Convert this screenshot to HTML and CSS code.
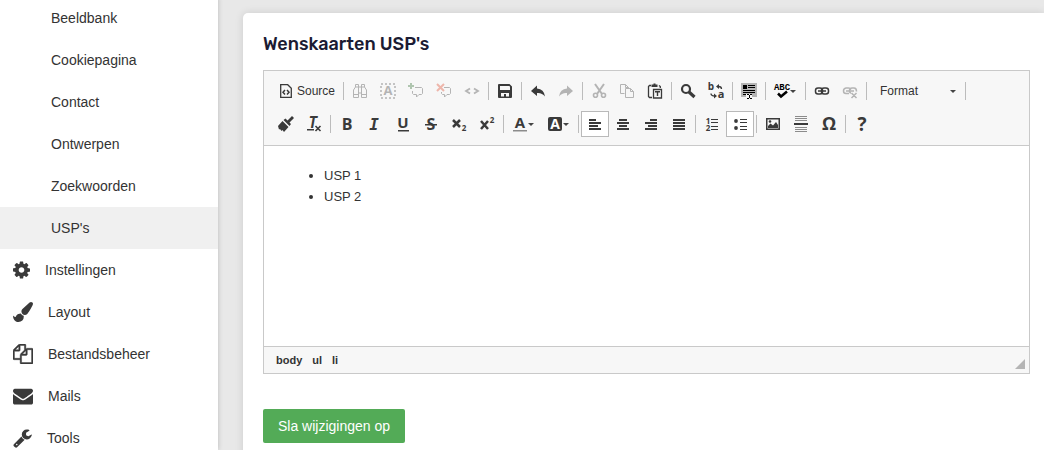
FILE: index.html
```
<!DOCTYPE html>
<html lang="nl">
  <head>
    <meta charset="utf-8" />
    <title>Wenskaarten USP's</title>
    <link rel="stylesheet" href="styles.css">
  </head>
  <body>
    <nav class="sidebar">
      <a class="sub" href="#">Beeldbank</a>
      <a class="sub" href="#">Cookiepagina</a>
      <a class="sub" href="#">Contact</a>
      <a class="sub" href="#">Ontwerpen</a>
      <a class="sub" href="#">Zoekwoorden</a>
      <a class="sub active" href="#">USP's</a>
      <a href="#">
        <svg width="17" height="20" viewBox="0 0 1536 1792"><path d="M1024 896q0-106-75-181t-181-75-181 75-75 181 75 181 181 75 181-75 75-181zm512-109v222q0 12-8 23t-20 13l-185 28q-19 54-39 91 35 50 107 138 10 12 10 25t-9 23q-27 37-99 108t-94 71q-12 0-26-9l-138-108q-44 23-91 38-16 136-29 186-7 28-36 28H657q-14 0-24.500-8.500T621 1634l-28-184q-49-16-90-37l-141 107q-10 9-25 9-14 0-25-11-126-114-165-168-7-10-7-23 0-12 8-23 15-21 51-66.500t54-70.500q-27-50-41-99L29 1041q-13-2-21-12.500T0 1005V783q0-12 8-23t19-13l186-28q14-46 39-92-40-57-107-138-10-12-10-24 0-10 9-23 26-36 98.500-107.500T337 263q13 0 26 10l138 107q44-23 91-38 16-136 29-186 7-28 36-28h222q14 0 24.500 8.500T915 158l28 184q49 16 90 37l142-107q9-9 24-9 13 0 25 10 129 119 165 170 7 8 7 22 0 12-8 23-15 21-51 66.500t-54 70.500q26 50 41 98l183 28q13 2 21 12.500t8 23.500z"/></svg>
        Instellingen
      </a>
      <a href="#">
        <svg width="20" height="20" viewBox="0 0 1792 1792"><path d="M1615 0q70 0 122.500 46.500T1790 163q0 63-45 151-332 629-465 752-97 91-218 91-126 0-216.500-92.500T755 845q0-128 92-212L1485 54q59-54 130-54zM706 1034q39 76 106.500 130t150.500 76l1 71q4 213-129.500 347T486 1792q-123 0-218-46.500T115.500 1618 29 1435 0 1215q7 5 41 30t62 44.500 59 36.500 46 17q41 0 55-37 25-66 57.500-112.500t69.500-76 88-47.500 103-25.500 125-10.500z"/></svg>
        Layout
      </a>
      <a href="#">
        <svg class="bold" width="20" height="20" viewBox="0 0 1792 1792"><path d="M1696 384q40 0 68 28t28 68v1216q0 40-28 68t-68 28H736q-40 0-68-28t-28-68v-288H96q-40 0-68-28t-28-68V640q0-40 20-88t48-76L476 68q28-28 76-48t88-20h416q40 0 68 28t28 68v328q68-40 128-40h416zm-544 213L853 896h299V597zM512 213L213 512h299V213zm196 647l316-316V128H640v416q0 40-28 68t-68 28H128v640h512v-256q0-40 20-88t48-76zm956 804V512h-384v416q0 40-28 68t-68 28H768v640h896z"/></svg>
        Bestandsbeheer
      </a>
      <a href="#">
        <svg width="20" height="20" viewBox="0 0 1792 1792"><path d="M1792 710v794q0 66-47 113t-113 47H160q-66 0-113-47T0 1504V710q44 49 101 87 362 246 497 345 57 42 92.500 65.500t94.500 48 110 24.500h2q51 0 110-24.500t94.500-48 92.500-65.500q170-123 498-345 57-39 100-87zm0-294q0 79-49 151t-122 123q-376 261-468 325-10 7-42.500 30.500t-54 38-52 32.500-57.500 27-50 9h-2q-23 0-50-9t-57.500-27-52-32.500-54-38T639 1015q-91-64-262-182.500T172 690q-62-42-117-115.500T0 438q0-78 41.500-130T160 256h1472q65 0 112.500 47t47.500 113z"/></svg>
        Mails
      </a>
      <a href="#">
        <svg width="19" height="20" viewBox="0 0 1664 1792"><path d="M384 1472q0-26-19-45t-45-19-45 19-19 45 19 45 45 19 45-19 19-45zm644-420l-682 682q-37 37-90 37-52 0-91-37L59 1626q-38-36-38-90 0-53 38-91l681-681q39 98 114.500 173.500T1028 1052zm634-435q0 39-23 106-47 134-164.500 217.500T1216 1024q-185 0-316.500-131.500T768 576t131.500-316.500T1216 128q58 0 121.500 16.500T1445 191q16 11 16 28t-16 28l-293 169v224l193 107q5-3 79-48.500t135.500-81T1630 582q15 0 23.500 10t8.500 25z"/></svg>
        Tools
      </a>
    </nav>

    <main>
      <form class="card">
        <h1>Wenskaarten USP's</h1>

        <div class="editor">
          <div class="toolbar">
            <div class="row">
              <button type="button" class="source">
                <svg viewBox="0 0 16 16"><path class="line" stroke-width="1.300" d="M2.700 1.700h7l3.600 3.600v9H2.700z"/><path class="line" stroke-width="1.500" d="M7 7L5 9.300 7 11.500M9 7l2 2.300-2 2.200"/></svg>
                Source
              </button>
              <span class="sep"></span>
              <button type="button" title="Find" disabled>
                <svg viewBox="0 0 16 16"><path class="line" d="M1.500 14.500V7l2-3V1.500h3V4h3V1.500h3V4l2 3v7.500h-5V10h-3v4.500zM6.500 4v6M9.500 4v6M1.500 11.500h5M9.500 11.500h5M3.500 4h3M9.500 4h3"/></svg>
              </button>
              <button type="button" title="Select All" disabled>
                <svg viewBox="0 0 16 16"><path class="line" stroke-width="1.500" stroke-dasharray="2 2" d="M1 1h14v14H1z"/><text x="8" y="12" font-size="13">A</text></svg>
              </button>
              <button type="button" title="Add comment" disabled>
                <svg viewBox="0 0 16 16"><path class="line" d="M7 4.500h6.500l1 1v5l-1 1H11L8.500 14v-2.500h-3l-1-1V8"/><path class="green" d="M2 0h2v2h2v2H4v2H2V4H0V2h2z"/></svg>
              </button>
              <button type="button" title="Remove comment" disabled>
                <svg viewBox="0 0 16 16"><path class="line" d="M8 4.500h5.500l1 1v5l-1 1H11L8.500 14v-2.500h-2l-1-1V9"/><path class="red" d="M1 1l7 7M8 1L1 8"/></svg>
              </button>
              <button type="button" title="Code" disabled>
                <svg viewBox="0 0 16 16"><path class="line" stroke-width="1.800" d="M6 5.500L2 8l4 2.500M10 5.500L14 8l-4 2.500"/></svg>
              </button>
              <span class="sep"></span>
              <button type="button" title="Save">
                <svg viewBox="0 0 16 16"><path fill-rule="evenodd" d="M1 2q0-1 1-1h10.500L15 3.500V14q0 1-1 1H2q-1 0-1-1zm2 1v4h10V3.500L12 3zm1 7v3.500h3V11h2v2.500h3V10z"/></svg>
              </button>
              <span class="sep"></span>
              <button type="button" title="Undo">
                <svg viewBox="0 0 16 16"><path d="M7 2.500v3q7 .5 8 8-3-4-8-3.500v3L1 8z"/></svg>
              </button>
              <button type="button" title="Redo" disabled>
                <svg viewBox="0 0 16 16"><path d="M9 2.500v3q-7 .5-8 8 3-4 8-3.500v3L15 8z"/></svg>
              </button>
              <span class="sep"></span>
              <button type="button" title="Cut" disabled>
                <svg viewBox="0 0 16 16"><path class="line" stroke-width="2" d="M4 1l7 10M13 1L6 11"/><circle class="line" stroke-width="1.600" cx="4.500" cy="12.200" r="2"/><circle class="line" stroke-width="1.600" cx="12.500" cy="12.200" r="2"/></svg>
              </button>
              <button type="button" title="Copy" disabled>
                <svg viewBox="0 0 16 16"><path class="line" d="M5.500 10.500h-4v-9h5l3 3v1M6.500 1.500v3h3M6.500 5.500h5l3 3v6h-8zM11.500 5.500v3h3"/></svg>
              </button>
              <button type="button" title="Paste as plain text">
                <svg viewBox="0 0 16 16"><path class="line" stroke-width="1.300" d="M4 2.500H2.500l-1 1v10l1 1H5M12 2.500l1.300 1V5M6.500 6.500h8v8.500h-8z"/><path d="M4.500 1.500h2V.5h2v1h2V4h-6zM8 8h5v1.500h-1.800V13H9.800V9.500H8z"/></svg>
              </button>
              <span class="sep"></span>
              <button type="button" title="Find">
                <svg viewBox="0 0 16 16"><circle class="line" stroke-width="2.200" cx="6" cy="6" r="4"/><path class="line" stroke-width="3.200" d="M9 9l5.500 5"/></svg>
              </button>
              <button type="button" title="Replace">
                <svg viewBox="0 0 16 16"><text x="3" y="7" font-size="10">b</text><text x="13" y="15" font-size="11">a</text><path class="line" stroke-width="1.300" d="M13.500 6q0-2.500-3-2.500M3 10.500q0 2.500 4 2.500"/><path d="M8 3.500L11 1v5zM9 13l-3-2.500v5z"/></svg>
              </button>
              <span class="sep"></span>
              <button type="button" title="Select">
                <svg viewBox="0 0 16 16"><path fill="#b5b5b5" d="M0 0h16v14H0z"/><path class="black" d="M2 2h4v4H2zM7 2h7v1H7zM7 4h7v1H7zM2 7h12v1H2zM2 9h12v1H2zM2 11h3v1H2z"/><path fill="#f7f7f7" d="M5 11h6v5H5z"/><path class="black" d="M6 11h2v1H6zM9 11h2v1H9zM8 12h1v3H8zM6 15h2v1H6zM9 15h2v1H9z"/></svg>
              </button>
              <span class="sep"></span>
              <button type="button" class="drop" title="Spell check">
                <svg viewBox="0 0 16 16"><text class="black abc" x="8" y="7">ABC</text><path class="line dark" stroke-width="2.500" d="M4 10.500l3 3 6-5"/></svg>
              </button>
              <span class="sep"></span>
              <button type="button" title="Link">
                <svg viewBox="0 0 16 16"><rect class="line" stroke-width="1.500" x="1.500" y="5" width="7" height="6" rx="2.500"/><rect class="line" stroke-width="1.500" x="7.500" y="5" width="7" height="6" rx="2.500"/><path class="line" stroke-width="1.500" d="M4 8h8"/></svg>
              </button>
              <button type="button" title="Unlink" disabled>
                <svg viewBox="0 0 16 16"><path class="line" stroke-width="1.500" d="M7 10.500H4q-2.500 0-2.500-2.500T4 5h2.500q2 0 2 2M9 10q-1.500 0-1.500-2.500T10 5h2q2.500 0 2.500 3.500M4 8h8M9.500 10l5 5M14.500 10l-5 5"/></svg>
              </button>
              <span class="sep"></span>
              <button type="button" class="format">Format</button>
              <span class="sep"></span>
            </div>

            <div class="row">
              <button type="button" title="Copy formatting">
                <svg viewBox="0 0 16 16"><path d="M14 0l2 2-4.500 4.500L13 8l-1.500 2L5.500 4 7.500 2.500 9.500 4.500zM4.500 5l6 6L6 16l-1.500-2-1 1L2 13l-1 .5L0 10z"/></svg>
              </button>
              <button type="button" title="Remove format">
                <svg viewBox="0 0 16 16"><text class="italic mono" x="7" y="12" font-size="15">T</text><path d="M1 13h7v1.500H1z"/><path class="line" stroke-width="1.600" d="M9.500 10l5 5M14.500 10l-5 5"/></svg>
              </button>
              <span class="sep"></span>
              <button type="button" title="Bold"><svg viewBox="0 0 16 16"><text x="8" y="14" font-size="16">B</text></svg></button>
              <button type="button" title="Italic"><svg viewBox="0 0 16 16"><text class="italic mono" x="7" y="14" font-size="16">I</text></svg></button>
              <button type="button" title="Underline"><svg viewBox="0 0 16 16"><text x="8" y="12" font-size="15">U</text><path d="M3 14h11v1.500H3z"/></svg></button>
              <button type="button" title="Strikethrough"><svg viewBox="0 0 16 16"><text x="8" y="14" font-size="16">S</text><path d="M2 8h12v1.500H2z"/></svg></button>
              <button type="button" title="Subscript"><svg viewBox="0 0 16 16"><path class="line" stroke-width="2.500" d="M2 4l7 7M9 4l-7 7"/><text x="13" y="15" font-size="8">2</text></svg></button>
              <button type="button" title="Superscript"><svg viewBox="0 0 16 16"><path class="line" stroke-width="2.500" d="M2 5l7 8M9 5l-7 8"/><text x="13" y="7" font-size="8">2</text></svg></button>
              <span class="sep"></span>
              <button type="button" class="drop" title="Text colour"><svg viewBox="0 0 16 16"><text x="8" y="12" font-size="15">A</text><path fill="#8c8c8c" d="M1 14h14v1.500H1z"/></svg></button>
              <button type="button" class="drop" title="Background colour"><svg viewBox="0 0 16 16"><rect x="1" y="1" width="14" height="14" rx="2"/><text class="white" x="8" y="13" font-size="14">A</text></svg></button>
              <span class="sep"></span>
              <button type="button" class="on" title="Align left"><svg viewBox="0 0 16 16"><path d="M2 3h7v2H2zM2 6h12v2H2zM2 9h9v2H2zM2 12h12v2H2z"/></svg></button>
              <button type="button" title="Center"><svg viewBox="0 0 16 16"><path d="M4 3h8v2H4zM2 6h12v2H2zM4 9h8v2H4zM2 12h12v2H2z"/></svg></button>
              <button type="button" title="Align right"><svg viewBox="0 0 16 16"><path d="M7 3h7v2H7zM2 6h12v2H2zM5 9h9v2H5zM2 12h12v2H2z"/></svg></button>
              <button type="button" title="Justify"><svg viewBox="0 0 16 16"><path d="M2 3h12v2H2zM2 6h12v2H2zM2 9h12v2H2zM2 12h12v2H2z"/></svg></button>
              <span class="sep"></span>
              <button type="button" title="Numbered list"><svg viewBox="0 0 16 16"><text x="4" y="8" font-size="8">1</text><text x="4" y="15" font-size="8">2</text><path d="M7 3h7v1H7zM7 6h7v1H7zM7 10h7v1H7zM7 13h7v1H7z"/></svg></button>
              <button type="button" class="on" title="Bulleted list"><svg viewBox="0 0 16 16"><circle cx="4" cy="5" r="1.900"/><circle cx="4" cy="12" r="1.900"/><path d="M8 3h7v1H8zM8 6h7v1H8zM8 10h7v1H8zM8 13h7v1H8z"/></svg></button>
              <span class="sep"></span>
              <button type="button" title="Image"><svg viewBox="0 0 16 16"><path fill-rule="evenodd" d="M1 2h14v12H1zm1.500 1.500v9h11v-9z"/><path d="M3 12V10l2.500-2.500L8 9.500 11 6l2 3v3z"/><circle cx="5" cy="5.500" r="1.300"/></svg></button>
              <button type="button" title="Horizontal line"><svg viewBox="0 0 16 16"><path fill="#8c8c8c" d="M2 0h12v1H2zM2 2h12v1H2zM2 4h12v1H2zM2 11h12v1H2zM2 13h12v1H2zM2 15h12v1H2z"/><path d="M1 7h14v2H1z"/></svg></button>
              <button type="button" title="Special character"><svg viewBox="0 0 16 16"><text x="8" y="14" font-size="18">Ω</text></svg></button>
              <span class="sep"></span>
              <button type="button" title="Help"><svg viewBox="0 0 16 16"><text x="8" y="15" font-size="19">?</text></svg></button>
            </div>
          </div>

          <div class="content" contenteditable="true" spellcheck="false">
            <ul>
              <li>USP 1</li>
              <li>USP 2</li>
            </ul>
          </div>

          <div class="path">
            <a href="#">body</a>
            <a href="#">ul</a>
            <a href="#">li</a>
            <span class="resizer"></span>
          </div>
        </div>

        <button type="submit" class="save">Sla wijzigingen op</button>
      </form>
    </main>
  </body>
</html>
```
FILE: styles.css
```
* {
  box-sizing: border-box;
}
body {
  margin: 0;
  height: 100vh;
  display: flex;
  overflow: hidden;
  background: #e8e8e8;
  color: #333;
  font-family: "Liberation Sans", Arial, sans-serif;
  font-size: 14px;
}
button {
  font-family: inherit;
}

/* menu */
.sidebar {
  flex: 0 0 218px;
  margin-top: -3px;
  background: #fff;
  box-shadow: 0 0 5px rgba(0, 0, 0, 0.2);
}
.sidebar a {
  display: flex;
  align-items: center;
  gap: 15px;
  height: 42px;
  padding-left: 13px;
  color: #333;
  text-decoration: none;
}
.sidebar a.sub {
  padding-left: 51px;
}
.sidebar a.active {
  background: #f0f0f0;
}
.sidebar svg {
  fill: #3a3a3a;
}
.sidebar svg.bold {
  stroke: #3a3a3a;
  stroke-width: 40;
}

main {
  flex: 1;
  min-width: 0;
  padding: 13px 0 0 25px;
}
.card {
  min-height: 100%;
  padding: 20px 14px 20px 20px;
  background: #fff;
  border-radius: 5px 0 0 0;
  box-shadow: 0 0 8px rgba(0, 0, 0, 0.12);
}
h1 {
  margin: 0 0 15px;
  color: #1b1b33;
  font-family: Rubik, Roboto, sans-serif;
  font-size: 18px;
  font-weight: 500;
  line-height: 22px;
}

/* editor */
.editor {
  border: 1px solid #c9c9c9;
}
.toolbar {
  padding: 7px 8px 8px;
  background: #f7f7f7;
  border-bottom: 1px solid #c9c9c9;
}
.row {
  display: flex;
  align-items: center;
  height: 26px;
}
.row + .row {
  margin-top: 7px;
}
.row button {
  display: flex;
  align-items: center;
  flex: 0 0 28px;
  height: 26px;
  padding: 0 5px;
  background: none;
  border: 1px solid transparent;
  color: #333;
  font-size: 12px;
  cursor: pointer;
}
.row button:disabled {
  opacity: 0.35;
  cursor: default;
}
.row button.on {
  background: #fff;
  border-color: #b9b9b9;
}
.row button.source {
  flex-basis: 69px;
  gap: 3px;
}
.row button.drop {
  flex-basis: 35px;
}
.row button.format {
  flex-basis: 94px;
  justify-content: space-between;
  padding: 0 6px 0 10px;
}
.drop::after,
.format::after {
  content: "";
  border: 3px solid transparent;
  border-top-color: #444;
  border-bottom: 0;
}
.sep {
  flex: 0 0 1px;
  height: 18px;
  margin: 0 2px;
  background: #bcbcbc;
}
.row svg {
  flex: none;
  width: 16px;
  height: 16px;
  overflow: visible;
  fill: #3a3a3a;
}
.row text {
  font-family: "Open Sans", "DejaVu Sans", sans-serif;
  font-weight: bold;
  text-anchor: middle;
}
.row text.italic {
  font-style: italic;
}
.row text.mono {
  font-family: "DejaVu Sans Mono", monospace;
}
.row text.abc {
  font-family: "Liberation Mono", monospace;
  font-size: 9px;
}
.row .black {
  fill: #000;
}
.row .white {
  fill: #fff;
}
.row .line {
  fill: none;
  stroke: #3a3a3a;
}
.row .dark {
  stroke: #000;
}
.row .green {
  fill: #2c6a2c;
}
.row .red {
  fill: none;
  stroke: #e04020;
  stroke-width: 2;
}

.content {
  min-height: 200px;
  padding: 19px 20px;
  font-size: 13px;
  line-height: 21px;
}
.content ul {
  margin: 0;
  padding-left: 40px;
}
.path {
  display: flex;
  align-items: center;
  gap: 10px;
  height: 27px;
  padding: 0 4px 0 12px;
  background: #f7f7f7;
  border-top: 1px solid #c9c9c9;
  font-size: 11px;
  font-weight: bold;
}
.path a {
  color: #333;
  text-decoration: none;
}
.resizer {
  align-self: flex-end;
  margin: 0 0 4px auto;
  border: 5px solid #b5b5b5;
  border-top-color: transparent;
  border-left-color: transparent;
}

.save {
  height: 34px;
  margin-top: 35px;
  padding: 0 15px;
  background: #53ab57;
  border: 0;
  border-radius: 2px;
  color: #fff;
  font-size: 14px;
  cursor: pointer;
}
```
